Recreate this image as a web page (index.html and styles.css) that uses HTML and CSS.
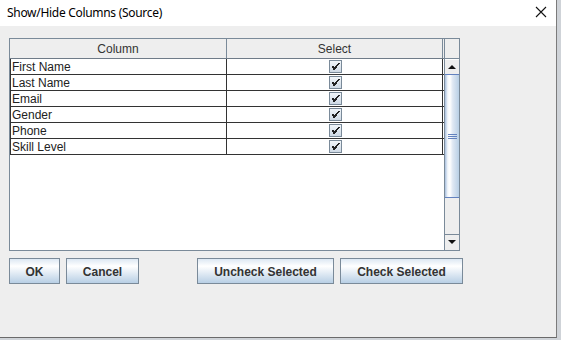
FILE: index.html
```html
<!DOCTYPE html>
<html lang="en">
<head>
    <meta charset="UTF-8">
    <title>Show/Hide Columns (Source)</title>
    <link rel="stylesheet" href="styles.css">
</head>
<body>
    <div class="window">
        <div class="titlebar">
            <span class="title">Show/Hide Columns (Source)</span>
            <svg class="close" width="12" height="12" viewBox="0 0 12 12">
                <path d="M1 1L11 11M11 1L1 11" stroke="#111" stroke-width="1.1" fill="none"/>
            </svg>
        </div>

        <div class="content">
            <div class="scroll-pane">
                <div class="viewport">
                    <div class="table-header">
                        <div class="cell col-name">Column</div>
                        <div class="cell col-select">Select</div>
                    </div>

                    <div class="table-row">
                        <div class="cell col-name">First Name</div>
                        <div class="cell col-select">
                            <svg class="checkbox" width="13" height="13" viewBox="0 0 13 13"><use href="#check"/></svg>
                        </div>
                    </div>
                    <div class="table-row">
                        <div class="cell col-name">Last Name</div>
                        <div class="cell col-select">
                            <svg class="checkbox" width="13" height="13" viewBox="0 0 13 13"><use href="#check"/></svg>
                        </div>
                    </div>
                    <div class="table-row">
                        <div class="cell col-name">Email</div>
                        <div class="cell col-select">
                            <svg class="checkbox" width="13" height="13" viewBox="0 0 13 13"><use href="#check"/></svg>
                        </div>
                    </div>
                    <div class="table-row">
                        <div class="cell col-name">Gender</div>
                        <div class="cell col-select">
                            <svg class="checkbox" width="13" height="13" viewBox="0 0 13 13"><use href="#check"/></svg>
                        </div>
                    </div>
                    <div class="table-row">
                        <div class="cell col-name">Phone</div>
                        <div class="cell col-select">
                            <svg class="checkbox" width="13" height="13" viewBox="0 0 13 13"><use href="#check"/></svg>
                        </div>
                    </div>
                    <div class="table-row">
                        <div class="cell col-name">Skill Level</div>
                        <div class="cell col-select">
                            <svg class="checkbox" width="13" height="13" viewBox="0 0 13 13"><use href="#check"/></svg>
                        </div>
                    </div>
                </div>

                <div class="scrollbar">
                    <div class="corner"></div>
                    <div class="arrow-button up"><span class="tri-up"></span></div>
                    <div class="thumb">
                        <span class="grip"></span>
                        <span class="grip"></span>
                        <span class="grip"></span>
                    </div>
                    <div class="track"></div>
                    <div class="arrow-button down"><span class="tri-down"></span></div>
                </div>
            </div>

            <div class="button-bar">
                <button class="btn btn-ok">OK</button>
                <button class="btn btn-cancel">Cancel</button>
                <button class="btn btn-uncheck">Uncheck Selected</button>
                <button class="btn btn-check">Check Selected</button>
            </div>
        </div>
    </div>

    <!-- símbolo do checkbox marcado -->
    <svg width="0" height="0" class="defs">
        <defs>
            <linearGradient id="box-fill" x1="0" y1="0" x2="0" y2="1">
                <stop offset="0" stop-color="#f2f6fa"/>
                <stop offset="1" stop-color="#cdd8e4"/>
            </linearGradient>
        </defs>
        <symbol id="check" viewBox="0 0 13 13">
            <rect x="0.5" y="0.5" width="12" height="12" fill="url(#box-fill)" stroke="#7a8a99"/>
            <g fill="#222">
                <rect x="9" y="3" width="2" height="1"/>
                <rect x="8" y="4" width="2" height="1"/>
                <rect x="7" y="5" width="2" height="1"/>
                <rect x="3" y="6" width="2" height="1"/>
                <rect x="6" y="6" width="2" height="1"/>
                <rect x="3" y="7" width="5" height="1"/>
                <rect x="4" y="8" width="3" height="1"/>
                <rect x="4" y="9" width="2" height="1"/>
            </g>
        </symbol>
    </svg>
</body>
</html>
```

FILE: styles.css
```css
* {
    margin: 0;
    padding: 0;
    box-sizing: border-box;
}

body {
    background: #cfd3d8;
    font-family: 'Liberation Sans', Arial, sans-serif;
    width: 561px;
    height: 340px;
    overflow: hidden;
}

.defs {
    position: absolute;
}

.window {
    width: 557px;
    height: 338px;
    background: #eeeeee;
    border-right: 1px solid #7b7b7b;
    border-bottom: 1px solid #6a6a6a;
    display: flex;
    flex-direction: column;
}

/* barra de título */
.titlebar {
    height: 26px;
    background: #ffffff;
    display: flex;
    align-items: center;
    justify-content: space-between;
    padding: 0 8px 2px 7px;
}

.title {
    font-family: 'Noto Sans', 'Open Sans', sans-serif;
    font-size: 12px;
    letter-spacing: -0.3px;
    color: #000000;
}

.close {
    margin-right: 1px;
}

.content {
    flex: 1;
    padding: 12px 0 0 9px;
}

/* tabela com scroll */
.scroll-pane {
    width: 451px;
    height: 213px;
    border: 1px solid #7a8a99;
    display: flex;
    background: #ffffff;
}

.viewport {
    width: 434px;
    background: #ffffff;
}

.table-header {
    display: flex;
    height: 20px;
    background: #eeeeee;
    border-bottom: 1px solid #6f7b88;
}

.table-header .cell {
    height: 19px;
    line-height: 21px;
    text-align: center;
    border-right: 1px solid #7a8a99;
    color: #333333;
    overflow: hidden;
}

.cell {
    font-size: 12px;
    color: #222222;
}

.col-name {
    width: 217px;
}

.col-select {
    width: 216px;
}

.table-row {
    display: flex;
    height: 16px;
    border-bottom: 1px solid #333333;
}

.table-row .cell {
    height: 15px;
    line-height: 17px;
    border-right: 1px solid #333333;
    overflow: hidden;
}

.table-row .col-name {
    border-left: 1px solid #333333;
    padding-left: 1px;
}

.table-row .col-select {
    display: flex;
    align-items: center;
    justify-content: center;
    padding-left: 1px;
}

.checkbox {
    display: block;
    width: 13px;
    height: 13px;
}

/* barra de rolagem */
.scrollbar {
    width: 15px;
    border-left: 1px solid #7a8a99;
    display: flex;
    flex-direction: column;
    background: #eeeeee;
}

.corner {
    height: 20px;
    border-bottom: 1px solid #7a8a99;
    background: #eeeeee;
}

.arrow-button {
    height: 15px;
    background: #eeeeee;
    display: flex;
    align-items: center;
    justify-content: center;
}

.arrow-button.up {
    border-top: 1px solid #ffffff;
}

.arrow-button.down {
    height: 16px;
    border-top: 1px solid #7a8a99;
    padding-bottom: 1px;
}

.tri-up {
    width: 0;
    height: 0;
    border-left: 4px solid transparent;
    border-right: 4px solid transparent;
    border-bottom: 4px solid #111111;
}

.tri-down {
    width: 0;
    height: 0;
    border-left: 4px solid transparent;
    border-right: 4px solid transparent;
    border-top: 4px solid #111111;
}

.thumb {
    height: 124px;
    border-top: 1px solid #6382bf;
    border-bottom: 1px solid #6382bf;
    background: linear-gradient(90deg, #a9c0de 0%, #f4f8fc 20%, #ffffff 35%, #dfe8f3 55%, #b8cfe5 100%);
    display: flex;
    flex-direction: column;
    align-items: center;
    justify-content: center;
    gap: 1px;
}

.grip {
    width: 9px;
    height: 1px;
    background: #6382bf;
}

.track {
    flex: 1;
    background: #eeeeee;
}

/* botões */
.button-bar {
    display: flex;
    gap: 6px;
    margin-top: 7px;
}

.btn {
    height: 26px;
    border: 1px solid #7a8a99;
    background: linear-gradient(180deg, #dde8f3 0%, #ffffff 30%, #b8cfe5 100%);
    font-family: 'Liberation Sans', Arial, sans-serif;
    font-size: 12px;
    font-weight: bold;
    color: #333333;
    padding: 1px 0 0;
}

.btn-ok {
    width: 51px;
}

.btn-cancel {
    width: 73px;
}

.btn-uncheck {
    width: 137px;
    margin-left: 52px;
}

.btn-check {
    width: 123px;
}
```
